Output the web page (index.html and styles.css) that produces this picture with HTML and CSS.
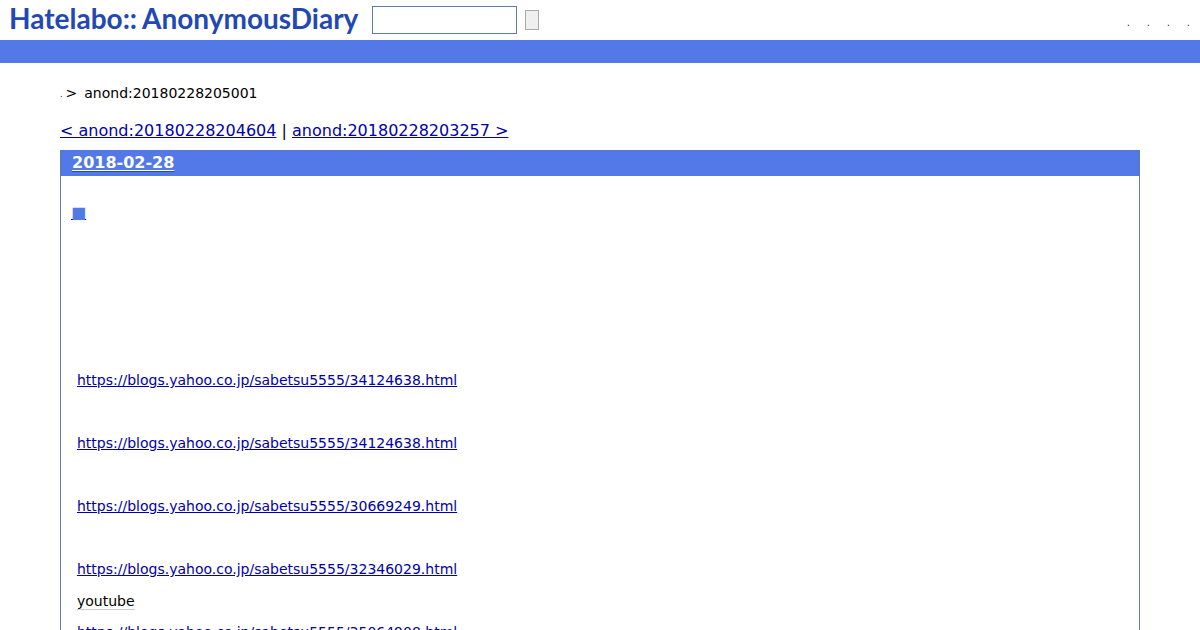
FILE: index.html
```html
<!DOCTYPE html>
<html lang="ja">
<head>
    <meta charset="UTF-8">
    <title>anond:20180228205001</title>
    <link rel="stylesheet" href="styles.css">
</head>
<body>

    <!-- Header -->
    <div class="header">
        <a class="logo" href="#">Hatelabo<span class="colons">::</span>AnonymousDiary</a>
        <form class="search">
            <input type="text" class="search-text">
            <input type="submit" class="search-btn" value="">
        </form>
        <div class="user-links">
            <a href="#">.</a>
            <a href="#">.</a>
            <a href="#">.</a>
            <a href="#">.</a>
        </div>
    </div>
    <div class="bar"></div>

    <div class="content">
        <p class="breadcrumb"><span class="dot">.</span><span class="gt">&gt;</span><span>anond:20180228205001</span></p>

        <p class="prev-next"><a href="#">&lt; anond:20180228204604</a> | <a href="#">anond:20180228203257 &gt;</a></p>

        <div class="day">
            <h2><a href="#">2018-02-28</a></h2>
            <div class="body">
                <h3><a href="#">■</a></h3>
                <p class="entry"><a href="#">https://blogs.yahoo.co.jp/sabetsu5555/34124638.html</a></p>
                <p class="entry"><a href="#">https://blogs.yahoo.co.jp/sabetsu5555/34124638.html</a></p>
                <p class="entry"><a href="#">https://blogs.yahoo.co.jp/sabetsu5555/30669249.html</a></p>
                <p class="entry"><a href="#">https://blogs.yahoo.co.jp/sabetsu5555/32346029.html</a></p>
                <p class="keyword"><span>youtube</span></p>
                <p class="entry last"><a href="#">https://blogs.yahoo.co.jp/sabetsu5555/35064908.html</a></p>
            </div>
        </div>
    </div>

</body>
</html>
```
FILE: styles.css
```css
html, body {
    height: 630px;
    overflow: hidden;
}

body {
    font-family: "DejaVu Sans", sans-serif;
    margin: 0;
    background: white;
    color: #000;
}

a {
    color: #00a;
}

.header {
    height: 40px;
    display: flex;
    align-items: flex-start;
}

.logo {
    font-family: "Lato", sans-serif;
    font-weight: 700;
    font-size: 28px;
    line-height: 37px;
    color: #2348b4;
    text-decoration: none;
    margin-left: 9px;
    white-space: nowrap;
}

.colons {
    margin-right: 5px;
}

.search {
    display: flex;
    align-items: center;
    margin: 6px 0 0 14px;
}

.search-text {
    box-sizing: border-box;
    width: 145px;
    height: 28px;
    margin: 0;
    border: 1px solid #5f7ba8;
    background: white;
}

.search-btn {
    box-sizing: border-box;
    width: 14px;
    height: 20px;
    margin: 0 0 0 8px;
    padding: 0;
    border: 1px solid #aaa;
    background: #efefef;
}

.user-links {
    margin-left: auto;
    display: flex;
    gap: 16.8px;
    padding: 17px 10px 0 0;
    font-size: 10px;
}

.user-links a {
    color: #333;
    text-decoration: none;
}

.bar {
    height: 23px;
    background: #5279e7;
}

.content {
    padding: 0 60px;
}

.breadcrumb {
    margin: 0;
    padding-top: 21px;
    height: 18px;
    font-size: 14px;
    line-height: 18px;
    display: flex;
}

.breadcrumb .dot {
    font-size: 8px;
    line-height: 22px;
}

.breadcrumb .gt {
    margin: 0 7px 0 3px;
}

.prev-next {
    margin: 19px 0 10px;
    font-size: 16px;
    line-height: 19px;
}

.day {
    border: 1px solid #5f7ba8;
    border-top: none;
    border-bottom: none;
    height: 480px;
    overflow: hidden;
}

.day h2 {
    margin: 0;
    height: 26px;
    padding-left: 11px;
    background: #5279e7;
    font-size: 16px;
    font-weight: bold;
    line-height: 25px;
    text-decoration: underline #2348b4;
    text-underline-offset: 3px;
}

.day h2 a {
    color: white;
    text-underline-offset: 2px;
}

.body {
    padding: 0 16px;
}

.body h3 {
    margin: 27px 0 0 -6px;
    font-size: 16px;
    font-weight: normal;
    line-height: 20px;
    height: 167px;
}

.body h3 a {
    color: #5279e7;
    text-decoration-color: #00a;
}

.entry {
    margin: 0 0 43px;
    font-size: 14px;
    line-height: 20px;
}

.keyword {
    margin: -31px 0 11px;
    font-size: 14px;
    line-height: 20px;
}

.keyword span {
    border-bottom: 1px solid #ccc;
}
```
